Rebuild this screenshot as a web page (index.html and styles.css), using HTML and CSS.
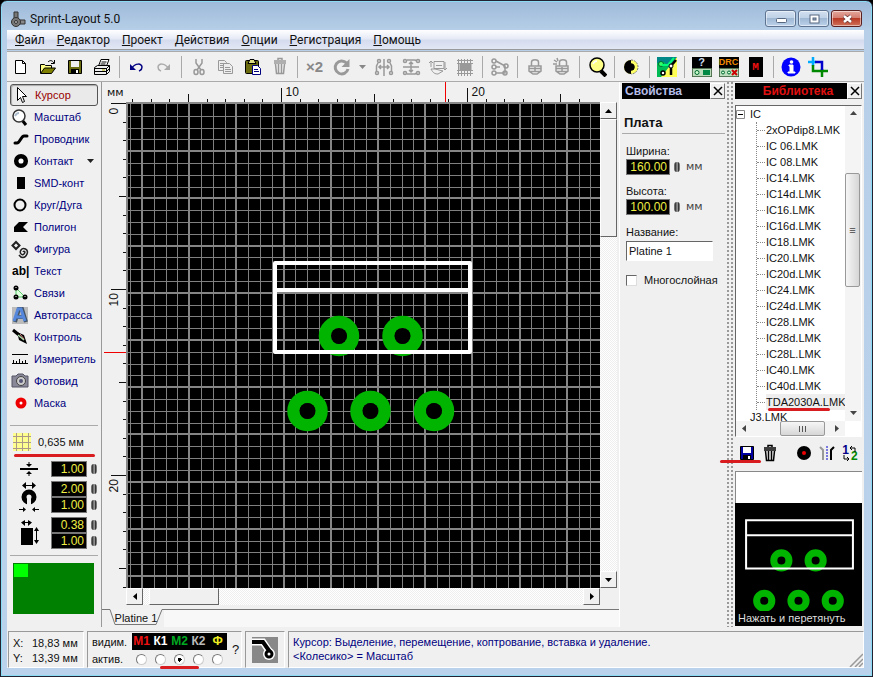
FILE: index.html
```html
<!DOCTYPE html>
<html lang="ru">
<head>
<meta charset="utf-8">
<title>Sprint-Layout 5.0</title>
<link rel="stylesheet" href="styles.css">
</head>
<body>
<div class="window">
  <header class="titlebar">
    <svg class="app-icon" width="16" height="16" viewBox="0 0 16 16"><path d="M4 1h4v7H4z" fill="#777" stroke="#333"/><path d="M8 9h7v4H8z" fill="#888" stroke="#333"/><circle cx="6" cy="11" r="4.5" fill="#777" stroke="#333"/><circle cx="6" cy="11" r="1.5" fill="#bbb" stroke="#333"/></svg>
    <h1>Sprint-Layout 5.0</h1>
    <div class="win-buttons">
      <button aria-label="Свернуть"><svg width="28" height="14"><rect x="9.500" y="6.500" width="10" height="4" rx="1" fill="#fff" stroke="#566780"/></svg></button>
      <button aria-label="Развернуть"><svg width="28" height="14"><rect x="10" y="3" width="9" height="8" fill="#fff" stroke="#566780"/><rect x="13" y="6" width="3" height="2" fill="#9ab" stroke="#566780"/></svg></button>
      <button class="close" aria-label="Закрыть"><svg width="28" height="14"><path d="M11 4l7 6M18 4l-7 6" stroke="#633" stroke-width="4"/><path d="M11 4l7 6M18 4l-7 6" stroke="#fff" stroke-width="2.500"/></svg></button>
    </div>
  </header>

  <nav class="menu">
    <a href="#"><u>Ф</u>айл</a><a href="#"><u>Р</u>едактор</a><a href="#"><u>П</u>роект</a><a href="#"><u>Д</u>ействия</a><a href="#"><u>О</u>пции</a><a href="#"><u>Р</u>егистрация</a><a href="#"><u>П</u>омощь</a>
  </nav>

  <div class="toolbar">
    <button aria-label="Новый"><svg width="20" height="20"><path d="M4.500 3.500h7l3 3v10h-10z" fill="#fff" stroke="#000"/><path d="M11.500 3.500v3h3" fill="none" stroke="#000"/></svg></button>
    <button aria-label="Открыть"><svg width="20" height="20"><path d="M2.500 16V7.500h4l1 1h6V11" fill="#ff8" stroke="#000"/><path d="M2.500 16.500l4-5.500h11l-4 5.500z" fill="#808000" stroke="#000"/><path d="M10 5c2-2 4-2 6 1M16.500 3v3.500H13" fill="none" stroke="#000"/></svg></button>
    <button aria-label="Сохранить"><svg width="20" height="20"><path d="M3.500 3.500h13v13h-13z" fill="#6b6b10" stroke="#000"/><path d="M6 4h8v6H6z" fill="#eee"/><path d="M6 12h8v4H6z" fill="#000"/><path d="M11 13h2v3h-2z" fill="#fff"/></svg></button>
    <button aria-label="Печать"><svg width="20" height="20"><path d="M6.500 9L9 2.500h8L14.500 9" fill="#fff" stroke="#000"/><path d="M9.500 5h5M8.500 7h5" stroke="#000"/><path d="M2.500 10.500l3-2h12v6l-3 3h-12z" fill="#eee" stroke="#000"/><path d="M2.500 11.500h12l3-3M2.500 14.500h12l3-3M14.500 11v6" fill="none" stroke="#000"/><path d="M10 13h3" stroke="#aa0"/></svg></button>
    <i></i>
    <button aria-label="Отменить"><svg width="20" height="20"><path d="M3 7v6h6z" fill="#000080"/><path d="M5 11c3-5 10-5 10-1 0 3-1 3-3 4" fill="none" stroke="#000080" stroke-width="1.500"/></svg></button>
    <button aria-label="Вернуть"><svg width="20" height="20"><path d="M16 7v6h-6z" fill="#aaa"/><path d="M14 11c-3-5-10-5-10-1 0 3 1 3 3 4" fill="none" stroke="#aaa" stroke-width="1.500"/></svg></button>
    <i></i>
    <button aria-label="Вырезать"><svg width="20" height="20" fill="none" stroke="#999" stroke-width="1.500"><path d="M7 2v4l5 7M13 2v4l-5 7"/><ellipse cx="7" cy="15" rx="2" ry="2.500"/><ellipse cx="13" cy="15" rx="2" ry="2.500"/></svg></button>
    <button aria-label="Копировать"><svg width="20" height="20" fill="#eee" stroke="#999"><path d="M2.500 3.500h6l2 2v8h-8z"/><path d="M4 6.500h4M4 8.500h4M4 10.500h4"/><path d="M7.500 6.500h6l3 3v7h-9z"/><path d="M9 10.500h5M9 12.500h6M9 14.500h6"/></svg></button>
    <button aria-label="Вставить"><svg width="20" height="20"><rect x="2.500" y="3.500" width="13" height="13" rx="1" fill="#6b6b10" stroke="#000"/><path d="M5 6.500l2-4h4l2 4z" fill="#dd8" stroke="#000"/><path d="M9.500 8.500h5l3 3v6h-8z" fill="#fff" stroke="#000080"/><path d="M11 12.500h4M11 14.500h5" stroke="#000080"/></svg></button>
    <button aria-label="Удалить"><svg width="20" height="20" fill="none" stroke="#999" stroke-width="1.500"><path d="M4 4h12M8 3V1.500h4V3M4 6h12M5.500 7l1 9.500h7l1-9.500M8.500 7v9M11.500 7v9"/></svg></button>
    <i></i>
    <button class="x2">×2</button>
    <button aria-label="Повернуть"><svg width="20" height="20"><path d="M14.500 6A6.500 6.500 0 1 0 16 12" fill="none" stroke="#999" stroke-width="3"/><path d="M17.500 2v8h-8z" fill="#999"/></svg></button>
    <button class="narrow" aria-label="Угол"><svg width="9" height="6"><path d="M1 1h7L4.500 5z" fill="#888"/></svg></button>
    <button aria-label="Отразить"><svg width="20" height="20" fill="none" stroke="#999" stroke-width="1.500"><path d="M10 2v17M6 10h8M7 8l-2 2 2 2M13 8l2 2-2 2"/><circle cx="5" cy="4" r="1.500"/><circle cx="15" cy="4" r="1.500"/><circle cx="3" cy="16" r="1.500"/><circle cx="17" cy="16" r="1.500"/><path d="M4 6L2.500 9v5M16 6l1.500 3v5"/></svg></button>
    <button aria-label="Отразить вертикально"><svg width="20" height="20" fill="none" stroke="#999" stroke-width="1.500"><path d="M2 10h16M10 6v8M8 7l2-2 2 2M8 13l2 2 2-2M6 3h8l2 1M6 17h8l2-1"/><circle cx="4" cy="4" r="1.500"/><circle cx="17" cy="4" r="1.500"/><circle cx="4" cy="16" r="1.500"/><circle cx="17" cy="16" r="1.500"/></svg></button>
    <button aria-label="Выровнять"><svg width="20" height="20" fill="none" stroke="#999"><path d="M3 10V4M1 6l2-2 2 2M6 4.500h10v7H6zM17 5v8M15 11l2 2 2-2M3 12c2 4 4 5 7 5l5-3-8-2z"/><path d="M8 8.500h6"/></svg></button>
    <button aria-label="Сетка"><svg width="20" height="20" stroke="#999"><path d="M2 3.500h16M2 6.500h16M2 13.500h16M2 16.500h16M3.500 2v17M6.500 2v17M9.500 2v17M12.500 2v17M15.500 2v17"/><path d="M5 7h11v6H5z" fill="#999"/></svg></button>
    <i></i>
    <button aria-label="Соединения"><svg width="20" height="20" fill="none" stroke="#999" stroke-width="1.500"><path d="M6 4l9 5v7H6M6 10h4"/><circle cx="4" cy="4" r="2"/><circle cx="4" cy="10" r="2"/><circle cx="4" cy="16" r="2"/><circle cx="16" cy="9" r="2"/><circle cx="15" cy="16" r="2"/></svg></button>
    <i></i>
    <button aria-label="Заблокировать"><svg width="20" height="20" fill="none" stroke="#999" stroke-width="1.500"><path d="M6.500 9V5c0-3 7-3 7 0v4M4 9h12v5l-4 3H8l-4-3zM4 11.500h12M5 14.500h10M10 10v5"/></svg></button>
    <button aria-label="Разблокировать"><svg width="20" height="20" fill="none" stroke="#999" stroke-width="1.500"><path d="M7.500 9V5c0-3 7-3 7 0v4M4 9h12v5l-4 3H8l-4-3zM4 11.500h12M5 14.500h10M10 10v5M2 3l3 2M1 7h4M5 1l1 3"/></svg></button>
    <i></i>
    <button aria-label="Лупа"><svg width="20" height="20"><path d="M14 14l5 5" stroke="#000" stroke-width="4"/><circle cx="10" cy="8" r="7" fill="#ff8" stroke="#000" stroke-width="1.500"/><path d="M6 7c1-2 2-3 4-3" stroke="#fff" stroke-width="1.500" fill="none"/></svg></button>
    <i></i>
    <button aria-label="Контраст"><svg width="20" height="20"><circle cx="9" cy="10" r="7" fill="#ff6"/><path d="M9 3a7 7 0 0 0 0 14v-3.500a3.500 3.500 0 0 0 0-7z" fill="#000"/><circle cx="9" cy="10" r="3.500"/><path d="M9 3a7 7 0 0 1 0 14" fill="none" stroke="#777" stroke-dasharray="2 1"/></svg></button>
    <i></i>
    <button aria-label="Фотовид"><svg width="20" height="20"><path d="M0 0h20v20H0z" fill="#088"/><path d="M0 6l7-1 7 8-6 7H0z" fill="#0b5"/><path d="M20 0v20H4z" fill="#ff5"/><circle cx="4" cy="7" r="2.500" fill="#3f6" stroke="#063"/><path d="M5 8h6l6-7" stroke="#0f7" fill="none" stroke-width="2"/><circle cx="6" cy="16" r="2" fill="#fff" stroke="#000" stroke-width="1.500"/><path d="M13 10l6-7M14 9v9" stroke="#000" stroke-width="2.500"/><circle cx="14" cy="9" r="2" fill="#fff" stroke="#000"/></svg></button>
    <i></i>
    <button aria-label="Сведения"><span class="chip"><b class="q">?</b><svg width="20" height="9"><path d="M.5.500h19v8H.5z" fill="#bdb" stroke="#575"/><circle cx="5" cy="4.500" r="2" fill="#cfc" stroke="#063"/><path d="M11 2h7v5h-7z" fill="#084"/></svg></span></button>
    <button aria-label="DRC"><span class="chip"><b class="drc">DRC</b><svg width="20" height="9"><path d="M.5.500h19v8H.5z" fill="#bdb" stroke="#575"/><circle cx="4" cy="4.500" r="1.500" fill="#cfc" stroke="#063"/><circle cx="10" cy="4.500" r="1.500" fill="#cfc" stroke="#063"/><path d="M13 2l5 5M18 2l-5 5" stroke="#c00" stroke-width="2"/></svg></span></button>
    <button aria-label="Макросы"><span class="chip macro">M</span></button>
    <i></i>
    <button aria-label="Информация"><svg width="20" height="20"><circle cx="10" cy="10" r="9.500" fill="#00f"/><path d="M8 8h4v7h2v1H7v-1h2V9H8z" fill="#fff" stroke="#fff"/><circle cx="10.500" cy="5" r="1.800" fill="#fff"/></svg></button>
    <button aria-label="Отсечь"><svg width="20" height="20" fill="none" stroke-width="2.500"><path d="M5 0v9M0 5h8" stroke="#0af"/><path d="M5 8v6h15M14 12v8" stroke="#080"/><path d="M7 5h7v8" stroke="#00c"/></svg></button>
  </div>

  <main class="main">
    <aside class="tools">
      <div class="tool-list">
        <button class="active"><svg width="20" height="20"><path d="M6.500 2.500v13l3-3 2 5 2-1-2-5h4z" fill="#fff" stroke="#000"/></svg>Курсор</button>
        <button><svg width="20" height="20"><path d="M12 13l4 5" stroke="#000" stroke-width="3"/><circle cx="9" cy="9" r="6" fill="#fff" stroke="#333" stroke-width="1.500"/><path d="M5 9c1-2 2-3 4-3" stroke="#abc" stroke-width="2" fill="none"/></svg>Масштаб</button>
        <button><svg width="20" height="20"><path d="M5 14h2c3 0 4-7 7-7h3" fill="none" stroke="#000" stroke-width="3" stroke-linecap="round"/></svg>Проводник</button>
        <button><svg width="20" height="20"><circle cx="11" cy="10" r="4.800" fill="#fff" stroke="#000" stroke-width="4.500"/></svg>Контакт<svg class="caret" width="9" height="6"><path d="M1 1h7L4.500 5z" fill="#222"/></svg></button>
        <button><svg width="20" height="20"><path d="M7 4h8v12H7z"/></svg>SMD-конт</button>
        <button><svg width="20" height="20"><circle cx="10" cy="10" r="5.500" fill="none" stroke="#000" stroke-width="2"/></svg>Круг/Дуга</button>
        <button><svg width="20" height="20"><path d="M4 10l5-5h9l-5 5 5 5H4z"/></svg>Полигон</button>
        <button><svg width="20" height="20" fill="none" stroke="#222"><path d="M6 3l3.500 3.500L6 10 2.500 6.500z" stroke-width="2"/><path d="M13 13c1-2 3 0 1 2s-5-1-3-4 8-1 6 4-6 4-8 1" stroke-width="1.500"/></svg>Фигура</button>
        <button><span class="ab">ab|</span>Текст</button>
        <button><svg width="20" height="20"><path d="M6 5l9 9H6z" fill="#dfd" stroke="#5c6"/><circle cx="6" cy="5" r="2.500"/><circle cx="6" cy="14" r="2.500"/><circle cx="15" cy="14" r="2.500"/><path d="M5.500 4.500h1M5.500 13.500h1M14.500 13.500h1" stroke="#fff"/></svg>Связи</button>
        <button><svg width="20" height="20"><path d="M2 2h16v17H2z" fill="#bbb"/><path d="M5 17L9 4h3l4 13M7 12h7" fill="none" stroke="#456" stroke-width="4"/><path d="M4 16L8 4h3l4 12M6 12h7" fill="none" stroke="#58d" stroke-width="3"/></svg>Автотрасса</button>
        <button><svg width="20" height="20"><path d="M3 3l6 5" stroke="#000" stroke-width="3"/><path d="M7 5l7 3 3 9-8-4z"/><path d="M8 8l6 5" stroke="#ada" stroke-width="1.500"/><path d="M10 7l4 5" stroke="#d88"/></svg>Контроль</button>
        <button><svg width="20" height="20"><path d="M2 5.500h16M2 14.500h16M3.500 11v3M6.500 12v2M9.500 10v4M12.500 12v2M15.500 11v3" stroke="#000"/></svg>Измеритель</button>
        <button><svg width="20" height="20"><path d="M2 5h4l2-2h5l2 2h3v11H2z" fill="#889" stroke="#556"/><circle cx="11" cy="10" r="4.500" fill="#ccc" stroke="#444"/><circle cx="11" cy="10" r="2" fill="#557"/></svg>Фотовид</button>
        <button><svg width="20" height="20"><circle cx="11" cy="10" r="3.500" fill="#fff" stroke="#e00" stroke-width="4"/></svg>Маска</button>
      </div>
      <button class="grid-step"><svg width="18" height="18"><path d="M0 0h18v18H0z" fill="#ffff90"/><path d="M0 3.500h18M0 9.500h18M0 15.500h18M3.500 0v18M9.500 0v18M15.500 0v18" stroke="#a98"/></svg>0,635 мм</button>
      <div class="mark mark-grid"></div>
      <div class="params">
        <div class="param"><svg width="20" height="16"><path d="M1 8h18" stroke="#000" stroke-width="2"/><path d="M10 1v4M10 11v4" stroke="#000"/><path d="M7 3h6l-3 3zM7 13h6l-3-3z"/></svg><div><label><input aria-label="Ширина дорожки" value="1.00"><i class="spin"></i></label></div></div>
        <div class="param"><svg width="20" height="30"><path d="M5 3.500h10" stroke="#000"/><path d="M3 3.500L7 0v7zM17 3.500L13 0v7z"/><circle cx="10" cy="15" r="5" fill="none" stroke="#000" stroke-width="5"/><path d="M8 17h4v6H8z" fill="#efefef"/><path d="M0 27.500h5M15 27.500h5" stroke="#000"/><path d="M4 25v5l3-2.500zM16 25v5l-3-2.500z"/></svg><div><label><input aria-label="Диаметр контакта" value="2.00"><i class="spin"></i></label><label><input aria-label="Отверстие" value="1.00"><i class="spin"></i></label></div></div>
        <div class="param"><svg width="20" height="28"><path d="M4 3.500h8M17.500 10v14" stroke="#000"/><path d="M2 3.500L6 1v6zM13 3.500L9 1v6zM15 12l2.500-4 2.500 4zM15 21l2.500 4 2.500-4z"/><path d="M2 9h12v17H2z"/></svg><div><label><input aria-label="Ширина SMD" value="0.38"><i class="spin"></i></label><label><input aria-label="Высота SMD" value="1.00"><i class="spin"></i></label></div></div>
      </div>
      <div class="overview"><div></div></div>
    </aside>

    <section class="work">
      <div class="ruler-top"><span class="unit">мм</span><svg id="ruler-x"></svg></div>
      <div class="sheet">
        <svg id="ruler-y"></svg>
        <svg class="canvas">
          <g id="grid"></g>
          <g fill="none" stroke="#00b400" stroke-width="12.500"><circle cx="211" cy="232" r="14"/><circle cx="274.500" cy="232" r="14"/><circle cx="179.500" cy="307" r="14"/><circle cx="242.500" cy="307" r="14"/><circle cx="306" cy="307" r="14"/></g>
          <g><circle cx="211" cy="232" r="8"/><circle cx="274.500" cy="232" r="8"/><circle cx="179.500" cy="307" r="8"/><circle cx="242.500" cy="307" r="8"/><circle cx="306" cy="307" r="8"/></g>
          <path d="M147 159h195v89H147zM147 186h195" fill="none" stroke="#fff" stroke-width="4" stroke-linejoin="round"/>
        </svg>
        <div class="vscroll"><button aria-label="Вверх"><svg width="7" height="4"><path d="M0 4h7L3.500 0z"/></svg></button><div class="thumb"></div><button class="end" aria-label="Вниз"><svg width="7" height="4"><path d="M0 0h7L3.500 4z"/></svg></button></div>
        <div class="hscroll"><button aria-label="Влево"><svg width="4" height="7"><path d="M4 0v7L0 3.500z"/></svg></button><div class="thumb"></div><button class="end" aria-label="Вправо"><svg width="4" height="7"><path d="M0 0v7l4-3.500z"/></svg></button></div>
      </div>
      <div class="tabs"><span class="tab-line"></span><button><svg width="56" height="17"><path d="M0 .5h2l5 15h41l6-15h2" fill="#f2f2f2" stroke="#777"/></svg><span>Platine 1</span></button><span class="tab-line rest"></span></div>
    </section>

    <aside class="props">
      <div class="caption"><h2>Свойства</h2><button aria-label="Закрыть свойства"><svg width="10" height="10"><path d="M1 1l8 8M9 1L1 9" stroke="#000" stroke-width="1.500"/></svg></button></div>
      <h3>Плата</h3>
      <div class="field"><label for="w">Ширина:</label><div><input id="w" class="num" value="160.00"><i class="spin"></i><span>мм</span></div></div>
      <div class="field"><label for="h">Высота:</label><div><input id="h" class="num" value="100.00"><i class="spin"></i><span>мм</span></div></div>
      <div class="field name"><label for="n">Название:</label><input id="n" value="Platine 1"></div>
      <label class="check"><input type="checkbox">Многослойная</label>
    </aside>
    <div class="splitter"></div>

    <aside class="library">
      <div class="caption red"><h2>Библиотека</h2><button aria-label="Закрыть библиотеку"><svg width="10" height="10"><path d="M1 1l8 8M9 1L1 9" stroke="#000" stroke-width="1.500"/></svg></button></div>
      <div class="tree">
        <div class="tree-view">
          <div class="root"><svg width="9" height="9"><path d="M.5.500h8v8h-8z" fill="#fff" stroke="#888"/><path d="M2 4.500h5" stroke="#000"/></svg>IC</div>
          <ul>
            <li>2xOPdip8.LMK</li><li>IC 06.LMK</li><li>IC 08.LMK</li><li>IC14.LMK</li><li>IC14d.LMK</li><li>IC16.LMK</li><li>IC16d.LMK</li><li>IC18.LMK</li><li>IC20.LMK</li><li>IC20d.LMK</li><li>IC24.LMK</li><li>IC24d.LMK</li><li>IC28.LMK</li><li>IC28d.LMK</li><li>IC28L.LMK</li><li>IC40.LMK</li><li>IC40d.LMK</li><li class="selected">TDA2030A.LMK<div class="mark mark-tree"></div></li>
          </ul>
          <div class="next">J3.LMK</div>
        </div>
        <div class="tree-v"><button aria-label="Вверх по списку"><svg width="7" height="5"><path d="M0 4h7L3.500 0z" fill="#444"/></svg></button><div class="thumb">≡</div><button aria-label="Вниз по списку"><svg width="7" height="5"><path d="M0 0h7L3.500 4z" fill="#444"/></svg></button></div>
        <div class="tree-h"><button aria-label="Влево по списку"><svg width="5" height="7"><path d="M4 0v7L0 3.500z" fill="#444"/></svg></button><div class="thumb"><svg width="9" height="6"><path d="M1.500 0v6M4.500 0v6M7.500 0v6" stroke="#555"/></svg></div><button aria-label="Вправо по списку"><svg width="5" height="7"><path d="M0 0v7l4-3.500z" fill="#444"/></svg></button></div>
      </div>
      <div class="lib-tools">
        <button aria-label="Сохранить макрос"><svg width="16" height="18"><path d="M1.500 2.500h13v13h-13z" fill="#0000a0" stroke="#000"/><path d="M4 3h8v6H4z" fill="#fff"/><path d="M4 11h8v4H4z" fill="#000"/><path d="M9 12h2v3H9z" fill="#fff"/></svg></button>
        <button aria-label="Удалить макрос"><svg width="16" height="18" fill="none" stroke="#000" stroke-width="1.500"><path d="M2 4h12M6 3V1.500h4V3M2 6h12M3.500 7l1 9.500h7l1-9.500M6.500 7v9M9.500 7v9"/></svg></button>
        <button class="gap" aria-label="Сторона"><svg width="16" height="18"><circle cx="8" cy="9" r="7"/><circle cx="8" cy="9" r="2" fill="#e00"/></svg></button>
        <button aria-label="Зеркально"><svg width="16" height="18" fill="none"><path d="M1 3l3 3v10" stroke="#999" stroke-width="2"/><path d="M8 2v15" stroke="#00c" stroke-dasharray="2 1"/><path d="M15 3l-3 3v10" stroke="#000" stroke-width="2"/></svg></button>
        <button class="renum" aria-label="Нумерация"><b>1</b><b>2</b><svg width="16" height="18" fill="none" stroke="#000"><path d="M13 8V4H8M10 2L8 4l2 2M2 11v4h5M5 13l2 2-2 2"/></svg></button>
      </div>
      <div class="mark mark-save"></div>
      <div class="blank"></div>
      <figure class="preview">
        <svg viewBox="0 0 126 107"><g fill="none" stroke="#00b400" stroke-width="7"><circle cx="46" cy="57" r="7.500"/><circle cx="80" cy="57" r="7.500"/><circle cx="29" cy="97" r="7.500"/><circle cx="63" cy="97" r="7.500"/><circle cx="97" cy="97" r="7.500"/></g><path d="M11 17h106v48H11zM11 32h106" fill="none" stroke="#fff" stroke-width="2"/></svg>
        <figcaption>Нажать и перетянуть</figcaption>
      </figure>
    </aside>
  </main>

  <footer class="status">
    <div class="coords"><span>X:</span><span>18,83 мм</span><span>Y:</span><span>13,39 мм</span></div>
    <div class="layers">
      <div class="layer-grid">
        <span>видим.</span><div class="names"><b class="m1">М1</b><b class="k1">К1</b><b class="m2">М2</b><b class="k2">К2</b><b class="f">Ф</b></div>
        <span>актив.</span><div class="radios"><input type="radio" name="layer" aria-label="М1"><input type="radio" name="layer" aria-label="К1"><input type="radio" name="layer" aria-label="М2" checked><input type="radio" name="layer" aria-label="К2"><input type="radio" name="layer" aria-label="Ф"></div>
      </div>
      <button class="help">?</button>
      <div class="mark mark-layer"></div>
    </div>
    <div class="mode"><svg width="26" height="26"><path d="M0 0h26v26H0z" fill="#888"/><path d="M0 5h11l8 12" fill="none" stroke="#fff" stroke-width="7"/><circle cx="17" cy="17" r="6" fill="#fff"/><path d="M0 5h11l7 10" fill="none" stroke="#000" stroke-width="4"/><circle cx="17" cy="17" r="3" fill="#fff" stroke="#000" stroke-width="3"/></svg></div>
    <div class="hint"><p>Курсор: Выделение, перемещение, коптрование, вставка и удаление.</p><p>&lt;Колесико&gt; = Масштаб</p><svg class="grip" width="14" height="14"><path d="M1 14L14 1M6 14l8-8M10 14l4-4" stroke="#999" stroke-width="1.500"/></svg></div>
  </footer>
</div>
<script src="script.js"></script>
</body>
</html>
```
FILE: styles.css
```css
* { box-sizing: border-box; }
body { margin: 0; font: 11px/14px "Liberation Sans", Arial, sans-serif; color: #111; background: #000; }
button, input { font: inherit; color: inherit; margin: 0; padding: 0; border: 0; background: none; border-radius: 0; }
button { display: flex; align-items: center; justify-content: center; }
svg { display: block; flex: none; }
h1, h2, h3, p, ul, figure { margin: 0; padding: 0; font-weight: normal; }
i { font-style: normal; }

.window { min-height: 100vh; display: flex; flex-direction: column; padding: 0 8px 8px 6px; border: 1px solid #223; border-radius: 7px 7px 0 0; background: linear-gradient(#9db9d8, #b7cfe8 30px, #bad2ec); box-shadow: inset 0 0 0 1px #8adcf5; }
.titlebar { height: 29px; display: flex; align-items: center; gap: 4px; padding: 6px 0 0 3px; }
.titlebar h1 { flex: 1; font: 12px/16px Roboto, "Noto Sans", sans-serif; color: #111; }
.win-buttons { display: flex; gap: 2px; padding-right: 2px; }
.win-buttons button { width: 31px; height: 17px; border: 1px solid #5d7390; border-radius: 3px; background: linear-gradient(#d2e0f0, #bdd0e6 50%, #9fb8d4 50%, #bcd2ea); box-shadow: inset 0 0 0 1px #ffffff80; }
.win-buttons .close { border-color: #5a2020; background: linear-gradient(#e4a79c, #d27a6c 50%, #b93a25 50%, #d0715a); }

.menu { height: 20px; margin-bottom: 1px; display: flex; gap: 12px; padding: 0 8px; border-bottom: 1px solid #999; background: linear-gradient(#fff, #e6eaf6 45%, #d5dcee 55%, #e2e7f5); font: 12px/20px Roboto, "Noto Sans", sans-serif; }
.menu a { color: #111; text-decoration: none; }

.toolbar { height: 31px; display: flex; align-items: center; border-top: 1px solid #aaa; border-bottom: 1px solid #aaa; background: #f0f0f0; overflow: hidden; }
.toolbar button { width: 27px; height: 27px; flex: none; }
.toolbar .narrow { width: 15px; }
.toolbar i { width: 8px; height: 22px; flex: none; background: linear-gradient(#aaa, #aaa) center / 1px 100% no-repeat; }
.toolbar .x2 { font-weight: bold; font-size: 15px; color: #888; }
.chip { display: flex; flex-direction: column; width: 20px; height: 20px; background: #000; }
.chip b { height: 11px; font: bold 11px/11px "Liberation Sans", sans-serif; color: #cde; text-align: center; }
.chip .drc { font-size: 9px; color: #e80; }
.chip.macro { width: 14px; color: #e11; font: bold 11px/20px "Liberation Mono", monospace; text-align: center; }

.main { flex: 1; display: flex; background: #f0f0f0; }
.tools { width: 95px; flex: none; padding: 2px 3px 0 3px; display: flex; flex-direction: column; border-right: 1px solid #999; }
.tool-list { padding-bottom: 11px; border-bottom: 1px solid #aaa; }
.tool-list button { width: 100%; height: 22px; justify-content: flex-start; gap: 4px; color: #000080; white-space: nowrap; }
.tool-list .active { border: 1px solid #555; border-radius: 3px; color: #900; background: #eaeaea; box-shadow: inset 1px 1px 1px #aaa; }
.tool-list .caret { margin-left: 8px; }
.ab { width: 20px; padding-left: 2px; font: bold 12px/16px "Liberation Sans", sans-serif; color: #000; text-align: left; }
.grid-step { height: 28px; justify-content: flex-start; gap: 7px; padding: 4px 0 0 3px; }
.mark { height: 3px; border-radius: 2px; background: #d81c20; }
.mark-grid { width: 81px; margin-left: 4px; }
.params { display: flex; flex-direction: column; gap: 4px; padding: 4px 0 6px 9px; border-bottom: 1px solid #aaa; }
.param { display: flex; align-items: center; gap: 12px; }
.param label { display: flex; align-items: center; gap: 4px; }
.param input, .num { width: 36px; height: 16px; border: 1px solid #777; background: #000; color: #ee4; font-size: 12px; text-align: right; padding-right: 2px; }
.spin { width: 6px; height: 10px; border-radius: 3px; background: linear-gradient(90deg, #888, #222 35%, #ddd 50%, #222 70%, #999); }
.overview { width: 81px; height: 51px; margin: 7px 0 0 3px; padding: 1px; background: #008000; }
.overview div { width: 14px; height: 13px; background: #0f0; }

.work { flex: 1; min-width: 0; display: flex; flex-direction: column; }
.ruler-top { display: flex; height: 20px; margin-right: 19px; }
.unit { width: 24px; flex: none; padding: 4px 0 0 5px; font: 11px/14px "DejaVu Sans", sans-serif; white-space: nowrap; }
.ruler-top svg { flex: 1; width: 0; height: 20px; }
.sheet { flex: 1; display: grid; grid-template: minmax(0, 1fr) 17px / 24px minmax(0, 1fr) 17px; margin-right: 2px; }
.sheet > svg { width: 100%; height: 100%; min-height: 0; }
#ruler-y { grid-row: 1 / 3; }
.sheet .canvas { background: #000; border: solid #888; border-width: 2px 0 0 2px; }
.tick { stroke: #111; }
.cursor { stroke: #f00000; }
.ruler-top text, #ruler-y text { font-size: 12px; fill: #111; }
.minor { stroke: #808080; fill: none; }
.major { stroke: #858585; stroke-width: 2; fill: none; }
.vscroll, .hscroll { display: flex; background: repeating-conic-gradient(#fff 0 25%, #eee 0 50%) 0 0 / 2px 2px; }
.vscroll { flex-direction: column; }
.hscroll { grid-column: 2; }
.vscroll button, .hscroll button, .vscroll .thumb, .hscroll .thumb { width: 17px; height: 17px; border: 1px solid; border-color: #fff #666 #666 #fff; background: #f0f0f0; }
.vscroll .thumb { height: 118px; }
.hscroll .thumb { width: 70px; margin-left: 6px; }
.vscroll .end { margin-top: auto; }
.hscroll .end { margin-left: auto; }
.tabs { display: flex; height: 22px; padding-top: 4px; }
.tab-line { width: 6px; border-top: 1px solid #777; }
.rest { flex: 1; background: #f8f8f8; }
.tabs button { position: relative; width: 56px; height: 17px; }
.tabs button svg { position: absolute; inset: 0; }
.tabs button span { position: relative; }

.props { width: 108px; flex: none; padding: 1px 2px 0 2px; border-left: 1px solid #fff; }
.caption { height: 16px; display: flex; align-items: center; background: #000; }
.caption h2 { flex: 1; padding-left: 3px; font-weight: bold; font-size: 12px; color: #b4bce8; }
.caption.red h2 { color: #e01010; text-align: center; padding-left: 14px; }
.caption button { width: 15px; height: 16px; background: #f0f0f0; border: 1px solid; border-color: #fff #777 #777 #fff; }
.props h3 { margin: 17px 0 9px; padding: 0 0 3px 2px; border-bottom: 1px solid #aaa; font-weight: bold; font-size: 13px; line-height: 14px; }
.field { display: flex; flex-direction: column; padding: 0 0 8px 4px; }
.field label { line-height: 16px; }
.field > div { display: flex; align-items: center; gap: 4px; font-family: "DejaVu Sans", sans-serif; color: #444; }
.num { width: 44px; font-family: "Liberation Sans", sans-serif; }
.field span { padding-left: 2px; }
.name { padding-top: 1px; }
.name input { width: 87px; height: 20px; padding-left: 2px; margin-top: 1px; border: 1px solid; border-color: #666 #fff #fff #666; background: #fff; }
.check { display: flex; align-items: center; gap: 7px; padding: 4px 0 0 4px; white-space: nowrap; }
.check input { appearance: none; width: 11px; height: 11px; border: 1px solid; border-color: #666 #ddd #ddd #666; background: #fff; }
.splitter { width: 8px; flex: none; background: radial-gradient(circle at 1px 1px, #999 0 1px, transparent 1px) 0 0 / 4px 4px; }

.library { width: 129px; flex: none; padding: 1px 2px 1px 0; display: flex; flex-direction: column; }
.tree { height: 332px; margin-top: 6px; display: grid; grid-template: minmax(0, 1fr) 15px / minmax(0, 1fr) 16px; border: 1px solid; border-color: #666 #fff #fff #666; background: #fff; }
.tree-view { min-height: 0; overflow: hidden; font-size: 11px; }
.root { display: flex; align-items: center; gap: 5px; height: 16px; }
.tree ul { list-style: none; margin-left: 20px; border-left: 1px dotted #888; }
.tree li { position: relative; height: 16px; line-height: 16px; padding-left: 9px; margin-right: -12px; white-space: nowrap; }
.tree li::before { content: ""; position: absolute; left: 0; top: 8px; width: 8px; border-top: 1px dotted #888; }
.tree .selected { background: linear-gradient(#eee, #eee) 9px 0 no-repeat; }
.mark-tree { position: absolute; left: 11px; top: 14px; width: 62px; z-index: 1; }
.next { padding-left: 14px; line-height: 15px; }
.tree-v, .tree-h { display: flex; background: #f4f4f4; }
.tree-v { flex-direction: column; }
.tree-v button, .tree-h button { width: 16px; height: 15px; flex: none; }
.tree-v .thumb { height: 114px; margin: 52px 1px auto 0; }
.tree-h .thumb { width: 45px; margin: 0 auto 0 28px; }
.tree .thumb { display: flex; align-items: center; justify-content: center; border: 1px solid #999; border-radius: 2px; background: linear-gradient(#f6f6f6, #d6d6d6); color: #444; }
.tree-v .thumb { background: linear-gradient(90deg, #f6f6f6, #d6d6d6); }
.lib-tools { display: flex; gap: 7px; padding: 7px 0 0 4px; }
.lib-tools button { width: 16px; height: 18px; }
.lib-tools .gap { margin-left: 11px; }
.renum { position: relative; }
.renum svg { position: absolute; inset: 0; }
.renum b { font-size: 12px; line-height: 12px; color: #008; align-self: flex-start; }
.renum b + b { color: #080; align-self: flex-end; margin-left: 2px; }
.mark-save { position: relative; width: 41px; margin-left: -15px; margin-top: -2px; }
.blank { height: 32px; margin-top: 8px; border: solid #888; border-width: 1px 0 0 1px; background: #fff; }
.preview { flex: 1; background: #000; color: #ddd; }
.preview svg { width: 100%; height: auto; }
.preview figcaption { padding-left: 3px; white-space: nowrap; }

.status { display: flex; gap: 3px; height: 41px; padding: 4px 0 0 1px; background: #f0f0f0; }
.status > div { border: 1px solid; border-color: #999 #fff #fff #999; }
.coords { width: 76px; display: grid; grid-template-columns: 14px 1fr; column-gap: 5px; padding: 4px 4px; line-height: 15px; white-space: nowrap; }
.layers { position: relative; width: 155px; display: flex; align-items: center; gap: 5px; padding: 0 5px 0 4px; }
.layer-grid { display: grid; grid-template-columns: 40px 95px; row-gap: 2px; align-items: center; }
.names, .radios { display: grid; grid-template-columns: repeat(5, 19px); justify-items: center; }
.names { background: #000; font-size: 12px; line-height: 17px; }
.m1 { color: #e11; } .k1 { color: #fff; } .m2 { color: #0a2; } .k2 { color: #bbb; } .f { color: #ee2; }
.radios input { appearance: none; width: 11px; height: 11px; border: 1px solid; border-color: #777 #ccc #ccc #777; border-radius: 50%; background: #fff; }
.radios input:checked { background: radial-gradient(circle, #000 0 2px, #fff 2px); }
.help { font-size: 13px; }
.mark-layer { position: absolute; left: 72px; bottom: -2px; width: 39px; }
.mode { width: 40px; display: flex; align-items: center; justify-content: center; }
.hint { position: relative; flex: 1; padding: 3px 4px; color: #000080; line-height: 14px; }
.grip { position: absolute; right: 0; bottom: 0; }
```
FILE: script.js
```js
// Rulers: 18.6px per millimetre; grid: 11.8px step with every fourth line heavy.
const NS = "http://www.w3.org/2000/svg";
const MM = 18.6, STEP = 11.8;

function add(parent, tag, attrs, text) {
  const el = document.createElementNS(NS, tag);
  for (const k in attrs) el.setAttribute(k, attrs[k]);
  if (text !== undefined) el.textContent = text;
  parent.appendChild(el);
}

function draw() {
  const canvas = document.querySelector(".canvas");
  const grid = document.getElementById("grid");
  const rx = document.getElementById("ruler-x");
  const ry = document.getElementById("ruler-y");
  [grid, rx, ry].forEach(e => e.replaceChildren());
  const w = canvas.clientWidth, h = canvas.clientHeight;
  let minor = "", major = "";
  for (let i = -1; 14 + i * STEP < w; i++) {
    const x = Math.round(14 + i * STEP);
    if (i % 4 === 0) major += `M${x} 0V${h}`; else minor += `M${x + 0.5} 0V${h}`;
  }
  for (let i = 1; i * STEP < h; i++) {
    const y = Math.round(i * STEP);
    if (i % 4 === 0) major += `M0 ${y}H${w}`; else minor += `M0 ${y + 0.5}H${w}`;
  }
  add(grid, "path", { class: "minor", d: minor });
  add(grid, "path", { class: "major", d: major });

  for (let mm = 2; (mm - 10) * MM + 156 < w; mm++) {
    const x = Math.round((mm - 10) * MM + 155) + 0.5;
    const len = mm % 10 === 0 ? 14 : mm % 5 === 0 ? 8 : 3;
    add(rx, "path", { class: "tick", d: `M${x} ${20 - len}V20` });
    if (mm % 10 === 0) add(rx, "text", { x: x + 4, y: 14 }, mm);
  }
  add(rx, "path", { class: "cursor", d: "M319.5 0V20" });
  for (let mm = 0; mm * MM < h; mm++) {
    const y = Math.round(mm * MM) + 1.5;
    const len = mm % 10 === 0 ? 15 : mm % 5 === 0 ? 7 : 3;
    add(ry, "path", { class: "tick", d: `M${24 - len} ${y}H24` });
    if (mm % 10 === 0) add(ry, "text", { transform: `translate(16 ${y + (mm ? 17 : 11)}) rotate(-90)` }, mm);
  }
  add(ry, "path", { class: "cursor", d: "M2 250.5H24" });
}
draw();
window.addEventListener("resize", draw);
```
